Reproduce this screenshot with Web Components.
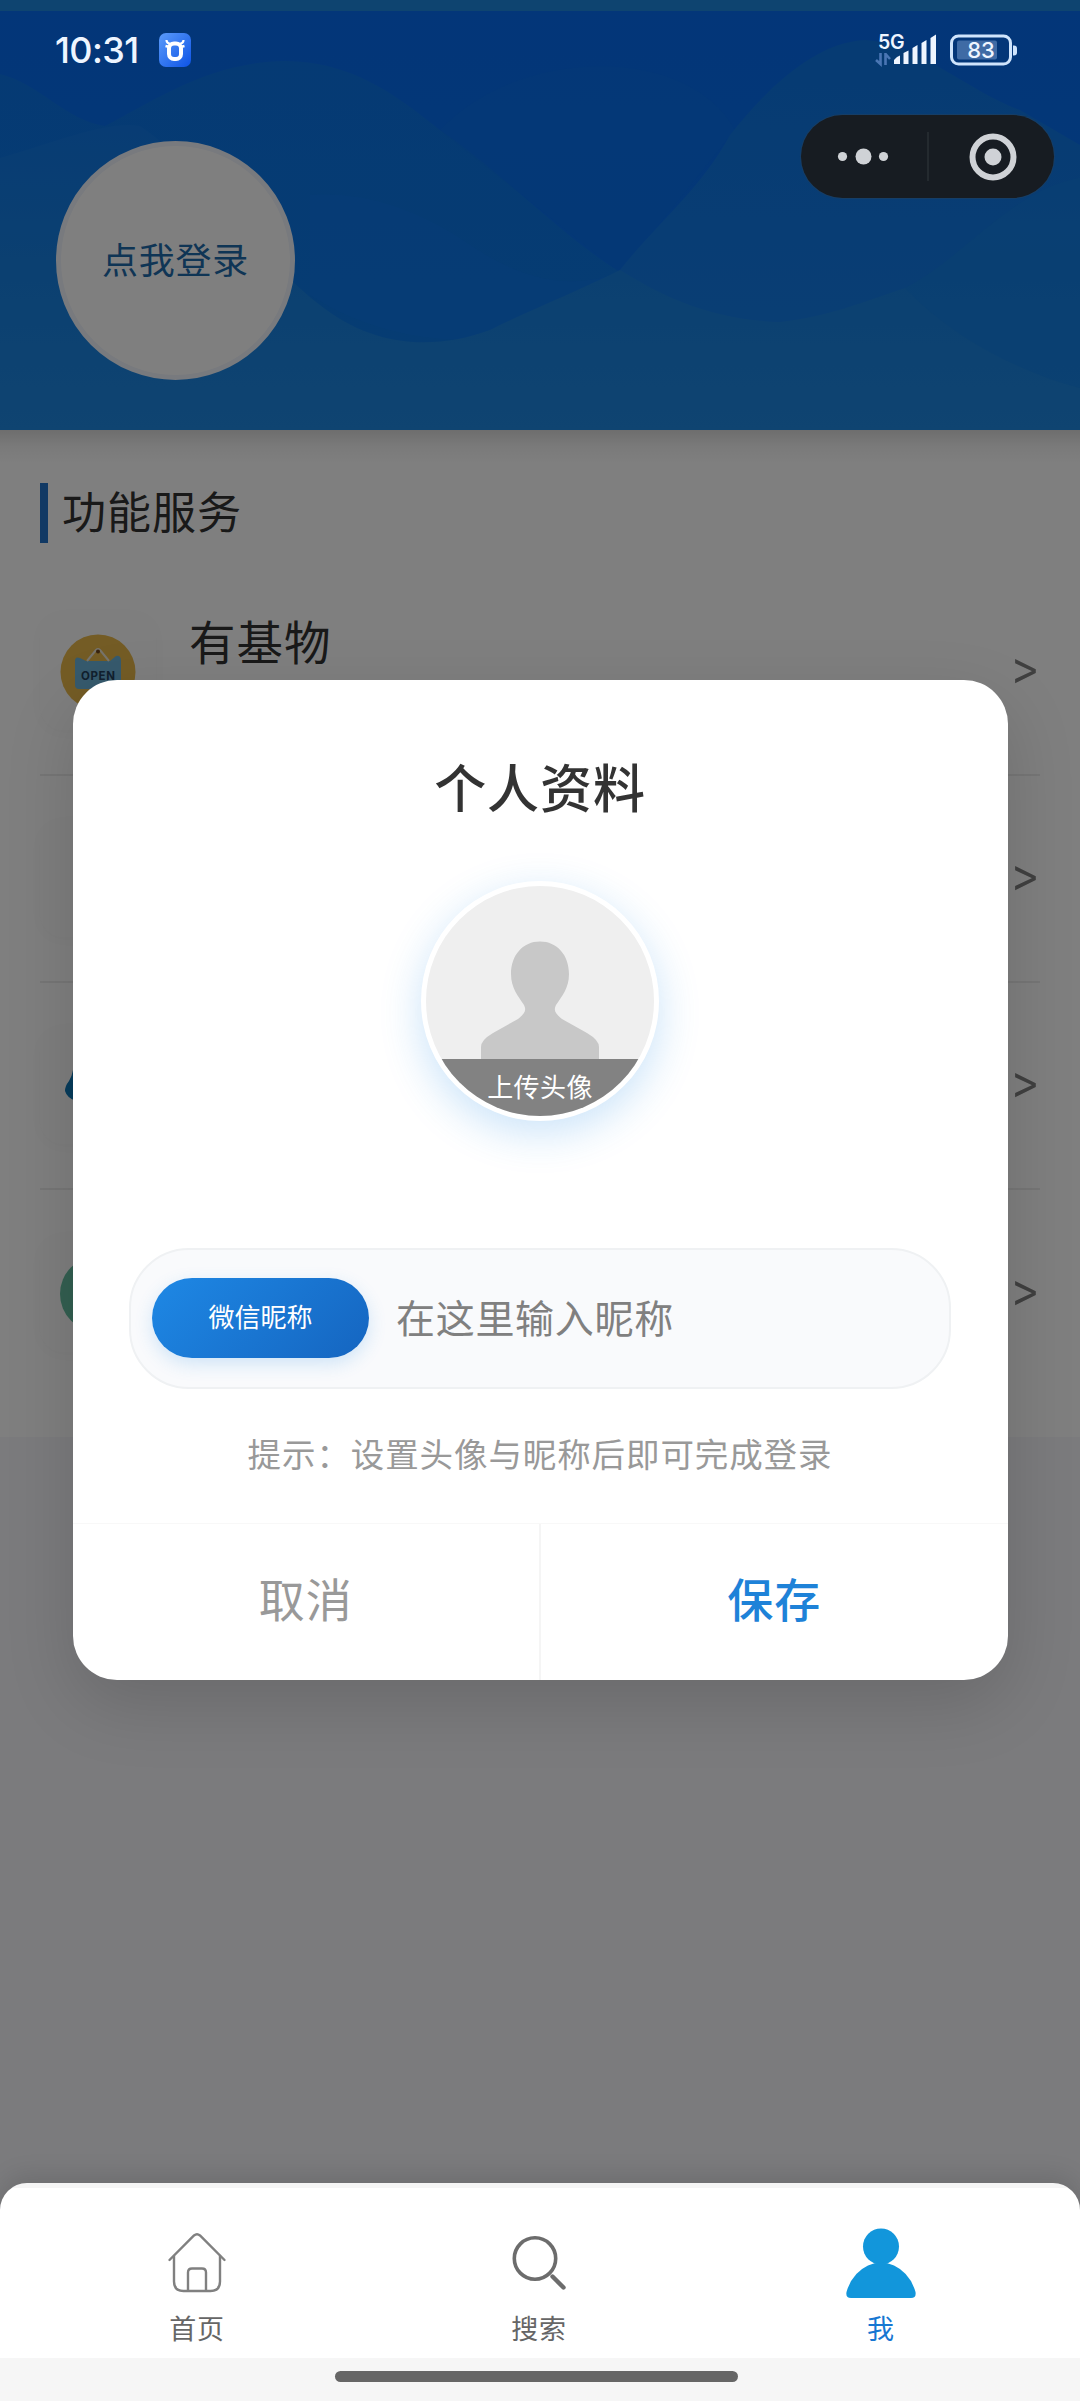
<!DOCTYPE html>
<html lang="zh-CN">
<head>
<meta charset="utf-8">
<title>我</title>
<style>
html,body{margin:0;padding:0}
body{width:1080px;height:2401px;overflow:hidden;background:#f6f7f9;font-family:"Noto Sans CJK SC",sans-serif}
</style>
</head>
<body>
<app-screen></app-screen>
<script>
const define=(name,html)=>customElements.define(name,class extends HTMLElement{
  constructor(){
    super();
    const t=document.createElement('template');
    t.innerHTML=html;
    this.attachShadow({mode:'open'}).append(t.content.cloneNode(true));
  }
});

define('status-bar',`<style>
:host{display:flex;height:100px;box-sizing:border-box;padding:0 62px 0 55px;align-items:center;color:#eef5ff}
.time{font:500 36px/44px Inter,sans-serif;letter-spacing:-.6px;width:104px;white-space:nowrap}
.app{display:block}
.right{margin-left:auto;display:flex;align-items:center;gap:13px}
.net{display:flex;width:62px;height:34px;align-items:flex-start}
.net div{display:flex;flex-direction:column;width:19px}
.net span{font:600 19.500px/20px Inter,sans-serif;letter-spacing:-.3px;white-space:nowrap;width:30px;margin:-1px 0 1px 3px}
svg{display:block;flex:none}
.bat{display:grid}
.bat>*{grid-area:1/1}
.bat span{font:500 22px/34px Inter,sans-serif;width:62px;text-align:center}
</style>
<div class="time">10:31</div>
<svg class="app" width="32" height="34" viewBox="0 0 32 34"><defs><linearGradient id="a" x1="0" y1="0" x2="1" y2="1"><stop offset="0" stop-color="#5b9bfa"/><stop offset="1" stop-color="#0d53e6"/></linearGradient></defs><rect width="32" height="34" rx="7" fill="url(#a)"/><path d="M7.500 7Q7.500 10.500 12 11M24.500 7Q24.500 10.500 20 11" fill="none" stroke="#fff" stroke-width="2.200"/><path d="M6.500 13l4 1M25.500 13l-4 1" stroke="#fff" stroke-width="2.400"/><rect x="10" y="10.500" width="12" height="15.500" rx="5" fill="none" stroke="#fff" stroke-width="4"/></svg>
<div class="right">
<div class="net"><div><span>5G</span><svg width="19" height="14" viewBox="0 0 19 14"><path d="M5.500 0v11L1 7M10.500 12V1l4.500 5" fill="none" stroke="#4a76b4" stroke-width="2.600"/></svg></div><svg width="43" height="34" viewBox="0 0 43 34"><path d="M0 31v-4q3-4 6-4.500V31zM9.500 31V20l5-2.500V31zM18.500 31V15l5-3V31zM27.500 31V10l5-3V31zM36.500 31V5l5.500-3.500V31z" fill="#eef5ff"/></svg></div>
<div class="bat"><svg width="68" height="34" viewBox="0 0 68 34"><rect x="1.500" y="3" width="59" height="28" rx="7" fill="none" stroke="#cfe4fc" stroke-width="3"/><rect x="7" y="7.500" width="40" height="19" rx="2" fill="#3f6ba5"/><path d="M63 12.500h1q3 0 3 3v4q0 3-3 3h-1z" fill="#cfe4fc"/></svg><span>83</span></div>
</div>`);

define('menu-capsule',`<style>
:host{display:flex;width:253px;height:83px;border-radius:42px;background:#171c22;box-shadow:0 0 0 1px #24405c88;align-items:center}
svg{display:block}
</style>
<svg width="253" height="83" viewBox="0 0 253 83"><g fill="#cfd2d6"><circle cx="41.500" cy="41.500" r="4.600"/><circle cx="62.500" cy="41.500" r="8"/><circle cx="82.500" cy="41.500" r="4.600"/><circle cx="192" cy="42" r="8.500"/></g><circle cx="192" cy="42" r="20.500" fill="none" stroke="#cfd2d6" stroke-width="6"/><path d="M127 17v49" stroke="#2a2f35" stroke-width="1.500"/></svg>`);

define('profile-header',`<style>
:host{display:grid;height:430px;overflow:hidden}
svg,.row{grid-area:1/1}
svg{display:block}
.row{padding:141px 0 0 56px}
.login{display:flex;box-sizing:border-box;width:239px;height:239px;border-radius:50%;background:#fff;border:5px solid #f0f4fc;align-items:center;justify-content:center;color:#1e6bab;font-size:36px;letter-spacing:.8px;line-height:44px}
.login span{padding-bottom:5px}
</style>
<svg width="1080" height="430" viewBox="0 0 1080 430">
<defs><linearGradient id="g0" x1="0" y1="0" x2="0" y2="1"><stop offset="0" stop-color="#066cf2"/><stop offset="1" stop-color="#0a74ec"/></linearGradient>
<linearGradient id="g1" gradientUnits="userSpaceOnUse" x1="0" y1="40" x2="0" y2="400"><stop offset="0" stop-color="#0b74e8"/><stop offset="1" stop-color="#0c7ae6"/></linearGradient>
<linearGradient id="g2" gradientUnits="userSpaceOnUse" x1="0" y1="40" x2="0" y2="400"><stop offset="0" stop-color="#0c76e6"/><stop offset="1" stop-color="#157eea"/></linearGradient>
<linearGradient id="g3" gradientUnits="userSpaceOnUse" x1="0" y1="130" x2="0" y2="430"><stop offset="0" stop-color="#1079e8"/><stop offset=".5" stop-color="#1781e2"/><stop offset="1" stop-color="#1e88e2"/></linearGradient></defs>
<rect width="1080" height="430" fill="url(#g0)"/>
<path d="M0 74C40 84 65 120 105 126C155 100 210 62 285 61C350 62 390 90 440 130C500 170 560 235 620 272V430H0Z" fill="url(#g1)"/>
<path d="M440 130C520 45 690 45 735 130L620 272Z" fill="#0a72ec" opacity=".5"/>
<path d="M730 135C765 90 815 42 865 40C915 42 970 92 1020 110L1080 145V430H420C520 300 590 290 620 270C660 220 700 190 730 135Z" fill="url(#g2)"/>
<path d="M310 195Q390 190 470 245T620 272Q560 330 470 340Q380 340 310 295Z" fill="#0e78ee" opacity=".55"/>
<path d="M0 158C60 140 110 120 140 126C200 165 260 260 320 305C370 345 430 352 490 330C530 310 580 290 620 270C660 295 710 320 780 322C830 316 860 303 905 288C960 262 1010 190 1080 178V430H0Z" fill="url(#g3)"/>
<path d="M905 288C960 262 1010 190 1080 178V388C1020 372 955 340 905 288Z" fill="#107de8" opacity=".5"/>
<rect width="1080" height="11" fill="#1c88e0"/>
</svg>
<div class="row"><div class="login"><span>点我登录</span></div></div>`);

define('service-item',`<style>
:host{display:flex;height:207px;box-sizing:border-box;border-bottom:2px solid #ececec;align-items:center}
:host([last]){border:0}
.ico{width:116px;height:116px;border-radius:22px;background:#fcfcfc;box-shadow:0 2px 18px #00000009;display:flex;align-items:center;justify-content:center}
.name{align-self:flex-start;margin:41px 0 0 33px;font-size:46.500px;letter-spacing:1px;line-height:60px;color:#333;flex:1}
.go{font:400 43px/60px "Noto Sans CJK SC",sans-serif;color:#808080;width:25px;margin:-9px 2px 0 0;text-align:center;transform:scaleY(1.25)}
</style>
<div class="ico"><slot name="icon"></slot></div><div class="name"><slot></slot></div><div class="go">&gt;</div>`);

define('service-card',`<style>
:host{display:block;height:1007px;box-sizing:border-box;background:linear-gradient(#dcdcdc,#f4f4f4 16px,#fff 34px);padding:53px 40px 0}
h2{margin:0 0 26px;height:60px;border-left:8px solid #2272c8;padding-left:14px;font-weight:400;font-size:44px;letter-spacing:1px;line-height:55px;color:#333}
svg{display:block}
</style>
<h2>功能服务</h2>
<service-item><svg slot="icon" width="76" height="76" viewBox="0 0 76 76"><circle cx="38" cy="38" r="37.500" fill="#e8b84a"/><path d="M15 27Q15 22 20 24L26 27H50L56 22Q61 21 61 27V51Q61 55 57 55H19Q15 55 15 51Z" fill="#6cb4da"/><path d="M27 27L36 16Q38 14 40 16L49 27" fill="none" stroke="#eee8d8" stroke-width="2"/><circle cx="38" cy="17.500" r="2" fill="#704820"/><text x="38" y="45.500" font-family="Inter,sans-serif" font-size="11.500" font-weight="700" text-anchor="middle" textLength="34" fill="#22405c">OPEN</text></svg>有基物</service-item>
<service-item></service-item>
<service-item><svg slot="icon" width="76" height="76" viewBox="0 0 76 76"><path d="M13 22Q24 4 34 22L58 53H16Q7 50 5 43Q5 38 9 33Q12 28 13 22Z" fill="#0e78b8"/></svg></service-item>
<service-item last><svg slot="icon" width="76" height="76" viewBox="0 0 76 76"><circle cx="38" cy="38" r="38" fill="#66bfa2"/></svg></service-item>`);

define('avatar-picker',`<style>
:host{display:block;width:228px;height:230px;border:5.500px solid #fff;border-radius:50%;box-shadow:0 12px 42px #1e88e53c;background:#efefef;overflow:hidden}
.in{display:flex;flex-direction:column}
svg{display:block;height:173px}
.cap{height:57px;background:#828282;color:#fff;text-align:center;font-size:26px;letter-spacing:.4px;line-height:53px}
</style>
<div class="in"><svg width="228" height="173" viewBox="0 0 228 173"><path d="M85 88C85 69 97 55.500 114 55.500S143 69 143 88C143 102 136 110 130 119C127 125 130 128 136 133L161 147Q173 154 173 161V173H55V161Q55 154 67 147L92 133C98 128 101 125 98 119C92 110 85 102 85 88Z" fill="#c8c8c8"/></svg>
<div class="cap">上传头像</div></div>`);

define('nickname-field',`<style>
:host{display:flex;box-sizing:border-box;height:141px;width:822px;border:2px solid #eff1f3;border-radius:60px;background:#f9fafc;align-items:center;padding-left:21px;gap:27px}
.tag{width:217px;height:80px;margin-top:-2px;border-radius:40px;background:linear-gradient(135deg,#1e88e5,#1565c0);box-shadow:0 6px 18px #1e88e530;color:#fff;text-align:center;font-size:26px;line-height:76px}
.ph{font-size:39px;letter-spacing:.7px;line-height:56px;color:#808080;margin-top:-6px}
</style>
<div class="tag">微信昵称</div><div class="ph">在这里输入昵称</div>`);

define('profile-dialog',`<style>
:host{display:flex;flex-direction:column;align-items:center;box-sizing:border-box;width:935px;height:1000px;border-radius:44px;background:#fff;overflow:hidden;box-shadow:0 24px 70px #00000024}
h1{margin:68px 0 57px;font-size:52px;font-weight:500;letter-spacing:.9px;line-height:76px;height:76px;color:#333}
nickname-field{margin-top:127px}
.tip{margin-top:39px;font-size:33.500px;letter-spacing:.9px;line-height:50px;color:#999}
.acts{margin-top:auto;align-self:stretch;display:flex;height:157px;border-top:1px solid #f8f8f8;box-sizing:border-box}
.acts div{flex:1;text-align:center;font-size:46px;letter-spacing:1px;line-height:147px;color:#999}
.acts div+div{border-left:2px solid #f5f5f5;color:#1e82d8;font-weight:500}
</style>
<h1>个人资料</h1>
<avatar-picker></avatar-picker>
<nickname-field></nickname-field>
<div class="tip">提示：设置头像与昵称后即可完成登录</div>
<div class="acts"><div>取消</div><div>保存</div></div>`);

define('tab-item',`<style>
:host{display:flex;flex-direction:column;align-items:center;width:342px;color:#666;font-size:27px;letter-spacing:.8px;line-height:36px}
:host([active]){color:#1677d2}
.i{height:76px;margin-bottom:12px}
</style><div class="i"><slot name="icon"></slot></div><div><slot></slot></div>`);

define('tab-bar',`<style>
:host{display:block}
.tabs{box-sizing:border-box;height:175px;border-radius:27px 27px 0 0;background:linear-gradient(#f5f5f5 5px,#fff 5px);display:flex;justify-content:center;padding:39px 2px 0 0}
.home{height:43px;background:#f6f6f6;display:flex;justify-content:center}
.home i{width:403px;height:10.500px;margin:13px 7px 0 0;border-radius:6px;background:#666}
svg{display:block}
</style>
<div class="tabs">
<tab-item><svg slot="icon" width="76" height="76" viewBox="0 0 76 76"><g fill="none" stroke="#808080" stroke-width="2.400" stroke-linecap="round"><path d="M10.500 38L35 13.500Q38 11 41 13.500L65.500 38"/><path d="M15 34V59.500Q15 69 24.500 69H51.500Q61 69 61 59.500V34"/><path d="M29 68.500V50.500Q29 46.500 33 46.500H43Q47 46.500 47 50.500V68.500"/></g></svg>首页</tab-item>
<tab-item><svg slot="icon" width="76" height="76" viewBox="0 0 76 76"><g fill="none" stroke="#6c6c6c" stroke-linecap="round"><circle cx="34" cy="36.500" r="20.700" stroke-width="3.600"/><path d="M51.500 54.500L62.500 65.500" stroke-width="4.400"/></g></svg>搜索</tab-item>
<tab-item active><svg slot="icon" width="76" height="76" viewBox="0 0 76 76"><g fill="#1296db"><circle cx="38" cy="24.500" r="18"/><path d="M3.500 70Q9 51 25 43.500Q38 37.500 51 43.500Q67 51 72.500 70Q73.500 76 68 76H8Q2.500 76 3.500 70Z"/></g></svg>我</tab-item>
</div>
<div class="home"><i></i></div>`);

define('app-screen',`<style>
:host{display:grid;grid-template:2401px/1080px;overflow:hidden}
:host>div{grid-area:1/1;min-width:0;isolation:isolate}
.page{background:#f6f7fb}
.modal{background:#00000080;display:flex;flex-direction:column;padding:680px 0 0;align-items:center;box-sizing:border-box}
.modal profile-dialog{flex:none}
tab-bar{margin-top:auto;align-self:stretch;border-radius:27px 27px 0 0;box-shadow:0 -8px 24px #0000001c}
.top{display:flex;flex-direction:column}
menu-capsule{align-self:flex-end;margin:15px 26px 0 0}
</style>
<div class="page"><profile-header></profile-header><service-card></service-card></div>
<div class="modal"><profile-dialog></profile-dialog><tab-bar></tab-bar></div>
<div class="top"><status-bar></status-bar><menu-capsule></menu-capsule></div>`);
</script>
</body>
</html>
